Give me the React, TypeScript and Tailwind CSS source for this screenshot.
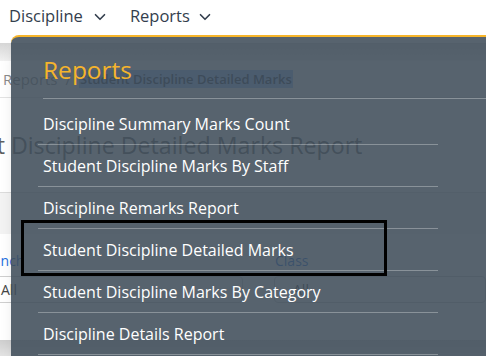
import React from 'react';
import { ChevronDown } from 'lucide-react';

const reportItems = [
  'Discipline Summary Marks Count',
  'Student Discipline Marks By Staff',
  'Discipline Remarks Report',
  'Student Discipline Detailed Marks',
  'Student Discipline Marks By Category',
  'Discipline Details Report',
];

function TopNav() {
  return (
    <div className="flex h-[33px] items-stretch bg-white text-[16.5px] text-[#333e4d]">
      <div className="flex items-center gap-[8px] pl-[9px] pr-[12px]">
        <span>Discipline</span>
        <ChevronDown className="h-[18px] w-[18px] stroke-[2.2]" />
      </div>
      <div className="flex h-[35px] items-center gap-[6px] border-b-2 border-[#f7b52a] pl-[9px] pr-[14px]">
        <span>Reports</span>
        <ChevronDown className="h-[18px] w-[18px] stroke-[2.2]" />
      </div>
    </div>
  );
}

// the page that sits behind the open menu
function BackgroundPage() {
  return (
    <div className="flex flex-col">
      <div className="h-[10px] bg-white" />
      <div className="h-[18px] bg-gradient-to-b from-[#d6d6d6] to-[#f1f1f1]" />
      <div className="flex h-[37px] items-center border-b border-[#e3e3e3] bg-white pl-[3px] text-[15px] text-[#8a8a8a]">
        <span>Reports</span>
        <span className="mx-[8px]">/</span>
        <span className="bg-[#9ec1fb] px-[1px] text-[13px] font-semibold leading-[18px] text-[#2c3e57]">Student Discipline Detailed Marks</span>
      </div>
      <div className="flex h-[95px] items-center overflow-hidden border-b border-[#dcdcdc] bg-white">
        <span className="-ml-[80px] whitespace-nowrap text-[23.2px] text-[#606060]">Student Discipline Detailed Marks Report</span>
      </div>
      <div className="h-[41px] bg-[#f3f3f3]" />
      <div className="flex h-[106px] flex-col bg-white">
        <div className="flex pt-[16px] text-[14px] font-medium text-[#1d6fe0]">
          <span className="-ml-[22px] w-[297px]">Branch</span>
          <span>Class</span>
        </div>
        <div className="mt-[5px] flex gap-[31px]">
          <div className="-ml-[10px] flex h-[27px] w-[253px] items-center rounded-[4px] border border-[#cfcfcf] pl-[10px] text-[14px] text-[#444]">All</div>
          <div className="flex h-[27px] flex-1 items-center rounded-[4px] border border-[#cfcfcf] pl-[18px] text-[14px] text-[#444]">All</div>
        </div>
      </div>
      <div className="h-[20px] bg-gradient-to-b from-[#cfcfcf] to-[#e8e8e8]" />
    </div>
  );
}

function ReportsMenu() {
  return (
    <div className="absolute left-[11px] top-[35px] right-0 bottom-0 rounded-tl-[8px] border-t-2 border-[#f7b52a] bg-[#404d5a]/[0.88] shadow-lg">
      <div className="ml-[32px] border-b border-white/30 pt-[16px] pb-[11px] text-[24.5px] leading-[34px] text-[#f5b42c]">
        Reports
      </div>
      <div className="ml-[27px] mt-[4px] w-[400px]">
        {reportItems.map((item) => (
          <div key={item} className="flex h-[42px] items-center border-b border-white/30 pl-[5px] text-[16px] font-medium text-white">
            {item}
          </div>
        ))}
      </div>
    </div>
  );
}

export default function App() {
  return (
    <div className="relative h-[356px] w-[486px] overflow-hidden bg-white font-['Open_Sans',sans-serif]">
      <TopNav />
      <BackgroundPage />
      <ReportsMenu />
      {/* annotation box drawn over the selected item */}
      <div className="absolute left-[21px] top-[220px] h-[56px] w-[366px] border-[3px] border-black" />
    </div>
  );
}
